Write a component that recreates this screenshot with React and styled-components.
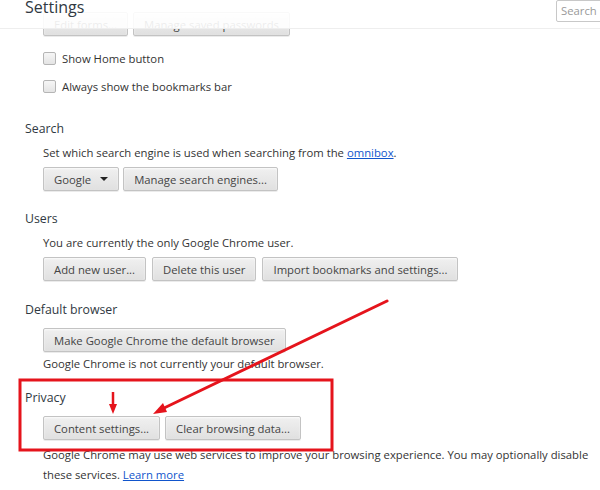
import React from "react";
import styled, { createGlobalStyle } from "styled-components";

const Global = createGlobalStyle`
  html, body { margin: 0; padding: 0; background: #fff; }
  body { font-family: "Open Sans", "Liberation Sans", sans-serif; }
`;

const Page = styled.div`
  position: relative;
  width: 600px;
  height: 490px;
  overflow: hidden;
  background: #fff;
  color: #333;
  font-size: 11.3px;
`;

const Header = styled.header`
  position: absolute;
  top: 0;
  left: 0;
  right: 0;
  height: 29px;
  background: rgba(255, 255, 255, 0.9);
  border-bottom: 1px solid #eeeeee;
  display: flex;
  align-items: flex-start;
  justify-content: space-between;
  padding-left: 25px;
  box-sizing: border-box;
  z-index: 2;
`;

const Title = styled.h1`
  margin: 0;
  margin-top: -5px;
  font-size: 16px;
  font-weight: 400;
  color: #303942;
  line-height: 24px;
`;

const SearchBox = styled.div`
  width: 60px;
  height: 22px;
  margin-right: -16px;
  border: 1px solid #c8c8c8;
  border-radius: 2px;
  box-sizing: border-box;
  padding-left: 4px;
  color: #999;
  line-height: 20px;
  font-size: 11.3px;
`;

const Content = styled.main`
  padding-top: 12px;
  padding-left: 25px;
`;

const Body = styled.div`
  padding-left: 18px;
`;

const Section = styled.section`
  margin-top: ${(p) => p.$mt ?? 18}px;
`;

const Heading = styled.h3`
  margin: 0;
  font-size: 12.3px;
  font-weight: 400;
  line-height: 20px;
  color: #303942;
`;

const Text = styled.div`
  margin-top: ${(p) => p.$mt ?? 4}px;
  line-height: 20px;
  color: #333;
`;

const Row = styled.div`
  display: flex;
  gap: ${(p) => p.$gap ?? 5}px;
  margin-top: ${(p) => p.$mt ?? 4}px;
`;

const Button = styled.button`
  height: 24px;
  box-sizing: border-box;
  padding: 0 10px;
  font-family: inherit;
  font-size: 11.3px;
  color: #444;
  border: 1px solid #c3c3c3;
  border-radius: 2px;
  background: linear-gradient(#f0f0f0, #e0e0e0);
  box-shadow: 0 1px 0 rgba(0, 0, 0, 0.08), inset 0 1px 2px rgba(255, 255, 255, 0.75);
  display: inline-flex;
  align-items: center;
  gap: 9px;
  white-space: nowrap;
`;

const Caret = styled.span`
  width: 0;
  height: 0;
  border-left: 4px solid transparent;
  border-right: 4px solid transparent;
  border-top: 4px solid #222;
`;

const CheckRow = styled.label`
  display: flex;
  align-items: center;
  height: 28px;
  gap: 6px;
`;

const Check = styled.span`
  width: 13px;
  height: 13px;
  box-sizing: border-box;
  border: 1px solid #b5b5b5;
  border-radius: 2px;
  background: linear-gradient(#f6f6f6, #e4e4e4);
`;

const Checks = styled.div`
  margin-top: 8px;
`;

const Link = styled.a`
  color: #1155cc;
  text-decoration: underline;
`;

const Annotation = styled.svg`
  position: absolute;
  inset: 0;
  pointer-events: none;
  z-index: 3;
`;

export default function App() {
  return (
    <Page>
      <Global />
      <Header>
        <Title>Settings</Title>
        <SearchBox>Search</SearchBox>
      </Header>
      <Content>
        <Body>
          <Row $mt={0}>
            <Button>Edit forms...</Button>
            <Button>Manage saved passwords</Button>
          </Row>
          <Checks>
            <CheckRow>
              <Check />
              Show Home button
            </CheckRow>
            <CheckRow>
              <Check />
              Always show the bookmarks bar
            </CheckRow>
          </Checks>
        </Body>

        <Section $mt={19}>
          <Heading>Search</Heading>
          <Body>
            <Text>
              Set which search engine is used when searching from the{" "}
              <Link>omnibox</Link>.
            </Text>
            <Row $gap={4}>
              <Button>
                Google <Caret />
              </Button>
              <Button>Manage search engines...</Button>
            </Row>
          </Body>
        </Section>

        <Section>
          <Heading>Users</Heading>
          <Body>
            <Text>You are currently the only Google Chrome user.</Text>
            <Row $gap={6}>
              <Button>Add new user...</Button>
              <Button>Delete this user</Button>
              <Button>Import bookmarks and settings...</Button>
            </Row>
          </Body>
        </Section>

        <Section $mt={19}>
          <Heading>Default browser</Heading>
          <Body>
            <Row $mt={8}>
              <Button>Make Google Chrome the default browser</Button>
            </Row>
            <Text $mt={2}>Google Chrome is not currently your default browser.</Text>
          </Body>
        </Section>

        <Section $mt={14}>
          <Heading>Privacy</Heading>
          <Body>
            <Row $mt={8}>
              <Button>Content settings...</Button>
              <Button>Clear browsing data...</Button>
            </Row>
            <Text $mt={5}>
              Google Chrome may use web services to improve your browsing experience. You may optionally disable
              these services. <Link>Learn more</Link>
            </Text>
          </Body>
        </Section>
      </Content>

      <Annotation width="600" height="490" viewBox="0 0 600 490">
        <rect x="20" y="380" width="312" height="70" fill="none" stroke="#e5141c" strokeWidth="3" />
        <line x1="387" y1="301" x2="162" y2="409" stroke="#e5141c" strokeWidth="3" strokeLinecap="round" />
        <polygon points="153,414 163,403 167,412" fill="#e5141c" />
        <line x1="113" y1="392" x2="113" y2="406" stroke="#e5141c" strokeWidth="2.5" />
        <polygon points="109,404 117,404 113,414" fill="#e5141c" />
      </Annotation>
    </Page>
  );
}
